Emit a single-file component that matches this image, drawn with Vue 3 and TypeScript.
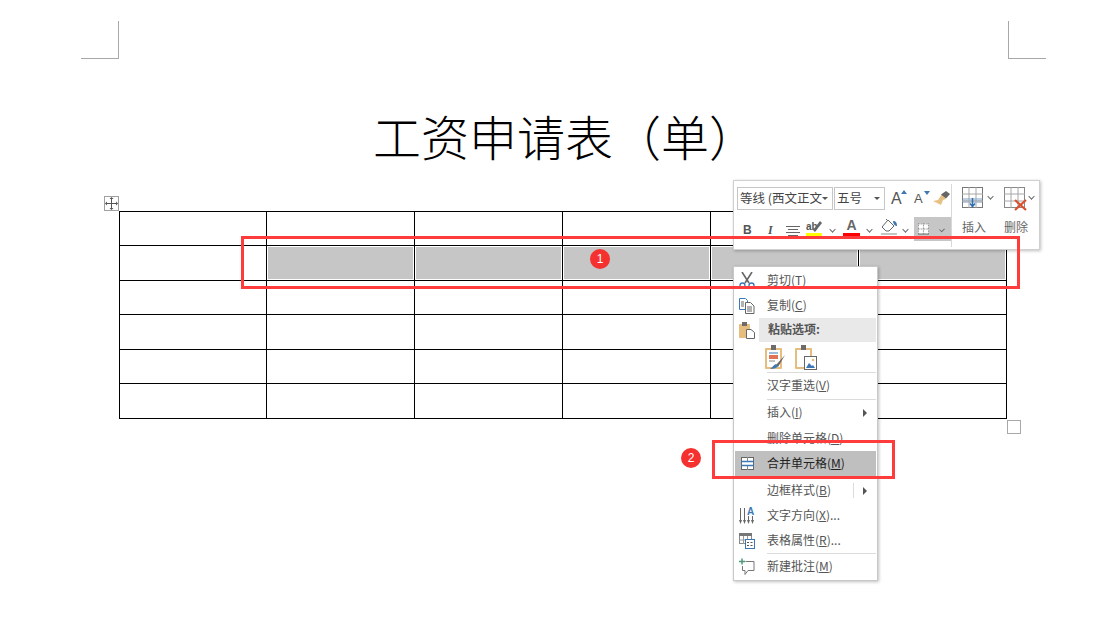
<script setup lang="ts">
interface MenuItem {
  id: string
  label: string
  key?: string
  tail?: string
  h: number
  arrow?: boolean
  split?: boolean
  sepAfter?: boolean
  active?: boolean
  head?: boolean
  gapAfter?: number
}

const items: MenuItem[] = [
  { id: 'cut', label: '剪切', key: 'T', h: 25 },
  { id: 'copy', label: '复制', key: 'C', h: 25 },
  { id: 'paste', label: '粘贴选项:', h: 24, head: true },
  { id: 'pasteopts', label: '', h: 30, sepAfter: true },
  { id: 'none', label: '汉字重选', key: 'V', h: 26, sepAfter: true },
  { id: 'none', label: '插入', key: 'I', h: 26, arrow: true },
  { id: 'none', label: '删除单元格', key: 'D', h: 25 },
  { id: 'merge', label: '合并单元格', key: 'M', h: 25, active: true, gapAfter: 2 },
  { id: 'none', label: '边框样式', key: 'B', h: 25, arrow: true, split: true },
  { id: 'dir', label: '文字方向', key: 'X', tail: '...', h: 25 },
  { id: 'props', label: '表格属性', key: 'R', tail: '...', h: 25, sepAfter: true },
  { id: 'note', label: '新建批注', key: 'M', h: 26 },
]

const rows = 6
const cols = 6
const cells = Array.from({ length: rows * cols }, (_, i) => ({
  id: i,
  shaded: i >= 7 && i <= 11,
}))
</script>

<template>
  <div class="page">
    <div class="marks">
      <div class="mark mark-left"></div>
      <div class="mark mark-right"></div>
    </div>

    <h1 class="title">工资申请表（单）</h1>

    <div class="table-wrap">
      <div class="move-handle">
        <svg width="13" height="13" viewBox="0 0 13 13">
          <path d="M6.500 1v11M1 6.500h11" stroke="#555" stroke-width="1" fill="none" />
          <path d="M6.500 0l-2 2h4zM6.500 13l-2-2h4zM0 6.500l2-2v4zM13 6.500l-2-2v4z" fill="#555" />
        </svg>
      </div>
      <div class="grid">
        <div v-for="c in cells" :key="c.id" class="cell">
          <div v-if="c.shaded" class="shade"></div>
        </div>
      </div>
      <div class="resize-handle"></div>
    </div>

    <!-- floating mini toolbar -->
    <div class="toolbar">
      <div class="tb-left">
        <div class="tb-row">
          <div class="combo combo-font"><span>等线 (西文正文</span><i class="caret"></i></div>
          <div class="combo combo-size"><span>五号</span><i class="caret"></i></div>
          <div class="tb-quick">
            <span class="grow-a big">A<svg class="tick" width="6" height="4" viewBox="0 0 6 4"><path d="M0 4l3-4 3 4z" fill="#3d78b5" /></svg></span>
            <span class="grow-a small">A<svg class="tick" width="6" height="4" viewBox="0 0 6 4"><path d="M0 0l3 4 3-4z" fill="#3d78b5" /></svg></span>
            <svg class="brush" width="17" height="15" viewBox="0 0 17 15">
              <path d="M9 3l4 5-3 1-2 5-8-4 5-1z" fill="#e7c083" />
              <path d="M8 3.500l5-3.500 4 3-4 4.500z" fill="#666" />
            </svg>
          </div>
        </div>
        <div class="tb-row tb-row2">
          <span class="fmt-b">B</span>
          <span class="fmt-i">I</span>
          <svg class="fmt-align" width="14" height="12" viewBox="0 0 14 12">
            <path d="M0 1.500h14M2 4.500h10M0 7.500h14M2 10.500h10" stroke="#666" stroke-width="1" />
          </svg>
          <span class="color-btn hl">
            <svg width="17" height="18" viewBox="0 0 17 18">
              <text x="0" y="12" class="ab">ab</text>
              <path d="M7 12l7-9 2 2-7 9z" fill="#666" />
              <rect x="0" y="15" width="16" height="3" fill="#ffff00" />
            </svg>
          </span>
          <i class="chev"></i>
          <span class="color-btn fa">
            <span class="fa-a">A</span>
            <span class="fa-bar"></span>
          </span>
          <i class="chev chev-fa"></i>
          <span class="color-btn fill">
            <svg width="17" height="18" viewBox="0 0 17 18">
              <path d="M1 9l6-7 6 6-5 5H5z" fill="#fff" stroke="#666" />
              <path d="M5 1l2 2" stroke="#666" />
              <path d="M12 3c3 0 4 2 4 5-2 0-4-2-4-5z" fill="#3d78b5" />
              <rect x="0" y="15.500" width="16" height="1" fill="#888" />
            </svg>
          </span>
          <i class="chev chev-fill"></i>
          <span class="border-btn">
            <svg width="14" height="14" viewBox="0 0 14 14">
              <rect x="0" y="0" width="14" height="14" fill="#fff" />
              <path d="M0.500 0v14M13.500 0v14M7 0v14M0 0.500h14M0 7h14" stroke="#555" stroke-dasharray="1 1" />
              <path d="M0 13.500h14" stroke="#333" />
            </svg>
            <i class="chev"></i>
          </span>
        </div>
      </div>
      <div class="tb-divider"></div>
      <div class="tb-action">
        <div class="act-icon">
          <svg width="21" height="21" viewBox="0 0 21 21">
            <rect x="0.500" y="0.500" width="20" height="20" fill="#fff" stroke="#777" />
            <rect x="1" y="11" width="19" height="5" fill="#bcd0e5" />
            <path d="M7 0v21M14 0v21M0 7h21M0 14h21" stroke="#a6a6a6" />
            <path d="M10.500 11v8M8 16.500l2.500 3 2.500-3" stroke="#2f6fb0" stroke-width="1.500" fill="none" />
          </svg>
          <i class="chev"></i>
        </div>
        <span class="act-label">插入</span>
      </div>
      <div class="tb-action">
        <div class="act-icon">
          <svg width="24" height="24" viewBox="0 0 24 24">
            <rect x="0.500" y="0.500" width="20" height="20" fill="#fff" stroke="#888" />
            <path d="M7 0v21M14 0v21M0 7h21M0 14h21" stroke="#a6a6a6" />
            <path d="M11 13l11 10M22 13L11 23" stroke="#d9512c" stroke-width="2.200" />
          </svg>
          <i class="chev chev-del"></i>
        </div>
        <span class="act-label">删除</span>
      </div>
    </div>

    <!-- context menu -->
    <div class="menu">
      <template v-for="(it, i) in items" :key="i">
        <div
          class="row"
          :class="{ active: it.active }"
          :style="{ height: it.h + 'px', marginBottom: (it.gapAfter || 0) + 'px' }"
        >
          <div class="ico">
            <svg v-if="it.id === 'cut'" width="16" height="17" viewBox="0 0 16 17">
              <path d="M3 0l7 11M13 0L6 11" stroke="#666" stroke-width="1.600" fill="none" />
              <circle cx="3.500" cy="13.500" r="2.500" fill="none" stroke="#3d78b5" stroke-width="1.300" />
              <circle cx="12.500" cy="13.500" r="2.500" fill="none" stroke="#3d78b5" stroke-width="1.300" />
            </svg>
            <svg v-else-if="it.id === 'copy'" width="16" height="16" viewBox="0 0 16 16">
              <path d="M0.500 0.500h6l2 2v9h-8z" fill="#fff" stroke="#3d78b5" />
              <path d="M6.500 4.500h5l3.500 3.500v7.500h-8.500z" fill="#fff" stroke="#666" />
              <path d="M8 9h5M8 11h5M8 13h5M2 4h3M2 6h3M2 8h3" stroke="#666" />
            </svg>
            <svg v-else-if="it.id === 'paste'" width="16" height="17" viewBox="0 0 16 17">
              <rect x="0" y="2" width="11" height="14" rx="1" fill="#e6bd7f" />
              <rect x="3" y="0" width="5" height="4" fill="#6b6b6b" />
              <path d="M7.500 7.500h4.500l3.500 3v6h-8z" fill="#fff" stroke="#666" />
            </svg>
            <svg v-else-if="it.id === 'merge'" class="merge-ico" width="13" height="13" viewBox="0 0 13 13">
              <rect x="0.500" y="0.500" width="12" height="12" fill="#fff" stroke="#666" />
              <path d="M6.500 0v5M6.500 8v5" stroke="#888" />
              <path d="M0 4.500h13M0 8.500h13" stroke="#3d78b5" stroke-width="1.300" />
            </svg>
            <svg v-else-if="it.id === 'dir'" width="16" height="18" viewBox="0 0 16 18">
              <path d="M1.500 1v13M5.500 1v13M9.500 9v5M13.500 9v5" stroke="#666" />
              <path d="M0 13l1.500 4 1.500-4zM4 13l1.500 4 1.500-4zM8 13l1.500 4 1.500-4zM12 13l1.500 4 1.500-4z" fill="#666" />
              <text x="8" y="8" class="dir-a">A</text>
            </svg>
            <svg v-else-if="it.id === 'props'" width="16" height="16" viewBox="0 0 16 16">
              <rect x="0.500" y="0.500" width="12" height="10" fill="#fff" stroke="#888" />
              <rect x="0" y="0" width="13" height="3" fill="#777" />
              <path d="M4.500 3v8M8.500 3v8M0 7h13" stroke="#999" />
              <rect x="6.500" y="6.500" width="9" height="9" fill="#fff" stroke="#3d78b5" />
              <path d="M8 9.500h2M11.500 9.500h2M8 12.500h2M11.500 12.500h2" stroke="#555" />
            </svg>
            <svg v-else-if="it.id === 'note'" class="note-ico" width="16" height="18" viewBox="0 0 16 18">
              <path d="M6.500 3.500h8.500v9H9l-3 4v-4H3.500V8" fill="none" stroke="#777" />
              <path d="M3 0.500v6M0 3.500h6" stroke="#4c9a7a" stroke-width="1.500" />
            </svg>
          </div>

          <div v-if="it.id === 'pasteopts'" class="paste-opts">
            <svg width="21" height="25" viewBox="0 0 21 25">
              <rect x="0" y="3" width="17" height="21" rx="1" fill="#e6bd7f" />
              <rect x="2" y="5" width="13" height="17" fill="#fff" />
              <rect x="6" y="0" width="5" height="5" fill="#6b6b6b" />
              <path d="M4 8h9" stroke="#3d78b5" />
              <rect x="4" y="10" width="9" height="4" fill="#d9512c" opacity="0.8" />
              <path d="M4 16h6" stroke="#888" />
              <path d="M20 10L11 20l2 2z" fill="#666" />
              <path d="M11 19c-3 1-3 3-6 5 4 0 7-1 8-3z" fill="#3d78b5" />
            </svg>
            <svg width="22" height="25" viewBox="0 0 22 25">
              <rect x="0" y="3" width="17" height="21" rx="1" fill="#e6bd7f" />
              <rect x="2" y="5" width="13" height="17" fill="#fff" />
              <rect x="6" y="0" width="5" height="5" fill="#6b6b6b" />
              <rect x="9.500" y="11.500" width="12" height="13" fill="#fff" stroke="#666" />
              <path d="M11 23l3-5 3 3 1-1 2 3z" fill="#3d78b5" />
              <circle cx="18" cy="15" r="1.300" fill="#e6bd7f" />
            </svg>
          </div>

          <div v-else class="label" :class="{ head: it.head }">
            <span class="txt">{{ it.label }}<template v-if="it.key">(<u>{{ it.key }}</u>)</template>{{ it.tail }}</span>
          </div>

          <span v-if="it.split" class="split"></span>
          <i v-if="it.arrow" class="arrow"></i>
        </div>
        <div v-if="it.sepAfter" class="sep"></div>
      </template>
    </div>

    <!-- annotations -->
    <div class="red red-1"></div>
    <div class="badge badge-1">1</div>
    <div class="red red-2"></div>
    <div class="badge badge-2">2</div>
  </div>
</template>

<style>
html,
body {
  margin: 0;
  background: #fff;
}
</style>

<style scoped>
.page {
  position: relative;
  width: 1117px;
  height: 627px;
  overflow: hidden;
  background: #fff;
  font-family: "Noto Sans CJK SC", "Liberation Sans", sans-serif;
  color: #444;
}

.marks {
  display: flex;
  justify-content: space-between;
  padding: 21px 71px 0 81px;
}
.mark {
  width: 37px;
  height: 37px;
  border-bottom: 1px solid #a8a8a8;
}
.mark-left {
  border-right: 1px solid #a8a8a8;
}
.mark-right {
  border-left: 1px solid #a8a8a8;
}

.title {
  margin: 44px 0 0 373px;
  font-size: 48px;
  line-height: 64px;
  height: 64px;
  font-weight: 300;
  color: #000;
  white-space: nowrap;
}

.table-wrap {
  position: relative;
  margin: 44px 0 0 119px;
  width: 888px;
}
.move-handle {
  position: absolute;
  left: -15px;
  top: -15px;
  width: 13px;
  height: 13px;
  border: 1px solid #a0a0a0;
  display: flex;
  background: #fff;
}
.resize-handle {
  position: absolute;
  right: -14px;
  bottom: -15px;
  width: 12px;
  height: 12px;
  border: 1px solid #a8a8a8;
}
.grid {
  display: grid;
  grid-template-columns: 147px repeat(5, 148px);
  grid-template-rows: repeat(3, 34px 35px);
  border-right: 1px solid #000;
  border-bottom: 1px solid #000;
  width: 887px;
}
.cell {
  border-left: 1px solid #000;
  border-top: 1px solid #000;
  display: flex;
  min-width: 0;
}
.shade {
  flex: 1;
  margin: 1px;
  background: #c6c6c6;
}

.toolbar {
  position: absolute;
  left: 733px;
  top: 180px;
  width: 305px;
  height: 68px;
  background: #fff;
  border: 1px solid #d0d0d0;
  box-shadow: 1px 1px 3px rgba(0, 0, 0, 0.25);
  display: flex;
  box-sizing: content-box;
}
.tb-left {
  width: 217px;
  padding: 6px 0 0 3px;
  box-sizing: border-box;
}
.tb-row {
  display: flex;
  align-items: center;
}
.combo {
  height: 21px;
  border: 1px solid #c6c6c6;
  display: flex;
  align-items: center;
  font-size: 12.500px;
  line-height: 1;
  color: #444;
  overflow: hidden;
  white-space: nowrap;
  padding-left: 2px;
  position: relative;
}
.combo-font {
  width: 92px;
}
.combo-size {
  width: 47px;
  margin-left: 1px;
}
.caret {
  position: absolute;
  right: 4px;
  top: 9px;
  border-left: 3px solid transparent;
  border-right: 3px solid transparent;
  border-top: 3px solid #555;
}
.tb-quick {
  display: flex;
  align-items: center;
  margin-left: 6px;
}
.grow-a {
  position: relative;
  font-family: "Liberation Sans", sans-serif;
  color: #555;
  display: block;
  width: 23px;
  line-height: 1;
}
.grow-a.big {
  font-size: 16px;
}
.grow-a.small {
  font-size: 13px;
  width: 19px;
}
.tick {
  position: absolute;
  left: 10px;
  top: -1px;
}
.brush {
  display: block;
}
.tb-row2 {
  margin-top: 7px;
  height: 24px;
  padding-left: 6px;
}
.fmt-b {
  font: bold 12px "Liberation Sans", sans-serif;
  color: #555;
  width: 25px;
  margin-top: 2px;
}
.fmt-i {
  font: italic bold 12px "Liberation Serif", serif;
  color: #555;
  width: 18px;
  margin-top: 2px;
}
.fmt-align {
  display: block;
  margin: 4px 6px 0 0;
}
.color-btn {
  width: 17px;
  height: 18px;
  display: block;
  position: relative;
  align-self: flex-start;
  margin-top: 1px;
}
.color-btn svg {
  display: block;
}
.ab {
  font: bold 10px "Liberation Sans", sans-serif;
  fill: #555;
}
.fa-a {
  display: block;
  font: bold 14px/15px "Liberation Sans", sans-serif;
  color: #666;
  text-align: center;
}
.fa-bar {
  display: block;
  height: 3px;
  background: #ff0000;
}
.chev {
  display: block;
  width: 4px;
  height: 4px;
  border-right: 1px solid #666;
  border-bottom: 1px solid #666;
  transform: rotate(45deg) scale(0.9);
  margin: 0 7px 0 7px;
}
.chev-fa {
  margin-right: 8px;
}
.color-btn.fa {
  margin-left: 1px;
}
.color-btn.fill {
  margin-left: 1px;
}
.chev-fill {
  margin-left: 5px;
}
.border-btn {
  display: flex;
  align-items: center;
  width: 37px;
  height: 24px;
  margin-left: -1px;
  background: #c6c6c6;
  padding-left: 4px;
  box-sizing: border-box;
}
.border-btn svg {
  display: block;
}
.border-btn .chev {
  margin-left: 11px;
}
.tb-divider {
  width: 1px;
  margin: 3px 0 2px;
  background: #d8d8d8;
}
.tb-action {
  width: 42px;
  padding-top: 6px;
  box-sizing: border-box;
  display: flex;
  flex-direction: column;
  padding-left: 10px;
}
.act-icon {
  display: flex;
  align-items: flex-start;
  height: 31px;
}
.act-icon svg {
  display: block;
  flex: none;
}
.act-icon .chev {
  margin: 7px 0 0 5px;
  flex: none;
}
.act-icon .chev-del {
  margin: 7px 0 0 1px;
}
.act-label {
  font-size: 12px;
  line-height: 18px;
  color: #666;
  white-space: nowrap;
}

.menu {
  position: absolute;
  left: 733px;
  top: 266px;
  width: 143px;
  background: #fff;
  border: 1px solid #c8c8c8;
  box-shadow: 1px 1px 3px rgba(0, 0, 0, 0.25);
  padding: 1px 0 0;
  height: 312px;
  box-sizing: content-box;
}
.row {
  display: flex;
  align-items: center;
  margin: 0 1px;
  position: relative;
  font-size: 12px;
  color: #555;
}
.row.active {
  background: #bfbfbf;
  color: #222;
}
.ico {
  width: 24px;
  flex: none;
  display: flex;
  justify-content: center;
}
.ico svg {
  display: block;
}
.label {
  flex: 1;
  padding-left: 8px;
  white-space: nowrap;
  line-height: 1;
  align-self: stretch;
  display: flex;
  align-items: center;
}
.txt {
  display: block;
  position: relative;
  top: -1px;
}
.label.head {
  background: #e9e9e9;
  font-weight: 700;
  color: #555;
  padding-left: 9px;
}
.paste-opts {
  display: flex;
  gap: 9px;
  padding-left: 6px;
}
.paste-opts svg {
  display: block;
}
.sep {
  height: 1px;
  margin: 0 1px 0 33px;
  background: #dcdcdc;
}
.split {
  position: absolute;
  left: 118px;
  top: 5px;
  width: 1px;
  height: 15px;
  background: #dcdcdc;
}
.arrow {
  position: absolute;
  right: 9px;
  top: 50%;
  margin-top: -4px;
  border-top: 4px solid transparent;
  border-bottom: 4px solid transparent;
  border-left: 4px solid #555;
}
.dir-a {
  font: bold 10px "Liberation Sans", sans-serif;
  fill: #3d78b5;
}

.red {
  position: absolute;
  border: 3px solid #ff3b3b;
  box-sizing: border-box;
}
.red-1 {
  left: 241px;
  top: 236px;
  width: 779px;
  height: 53px;
}
.red-2 {
  left: 712px;
  top: 440px;
  width: 183px;
  height: 39px;
}
.badge {
  position: absolute;
  width: 20px;
  height: 20px;
  border-radius: 50%;
  background: #f5312f;
  color: #fff;
  font: 12px/20px "Liberation Sans", sans-serif;
  text-align: center;
}
.badge-1 {
  left: 590px;
  top: 249px;
}
.badge-2 {
  left: 681px;
  top: 448px;
}
</style>
